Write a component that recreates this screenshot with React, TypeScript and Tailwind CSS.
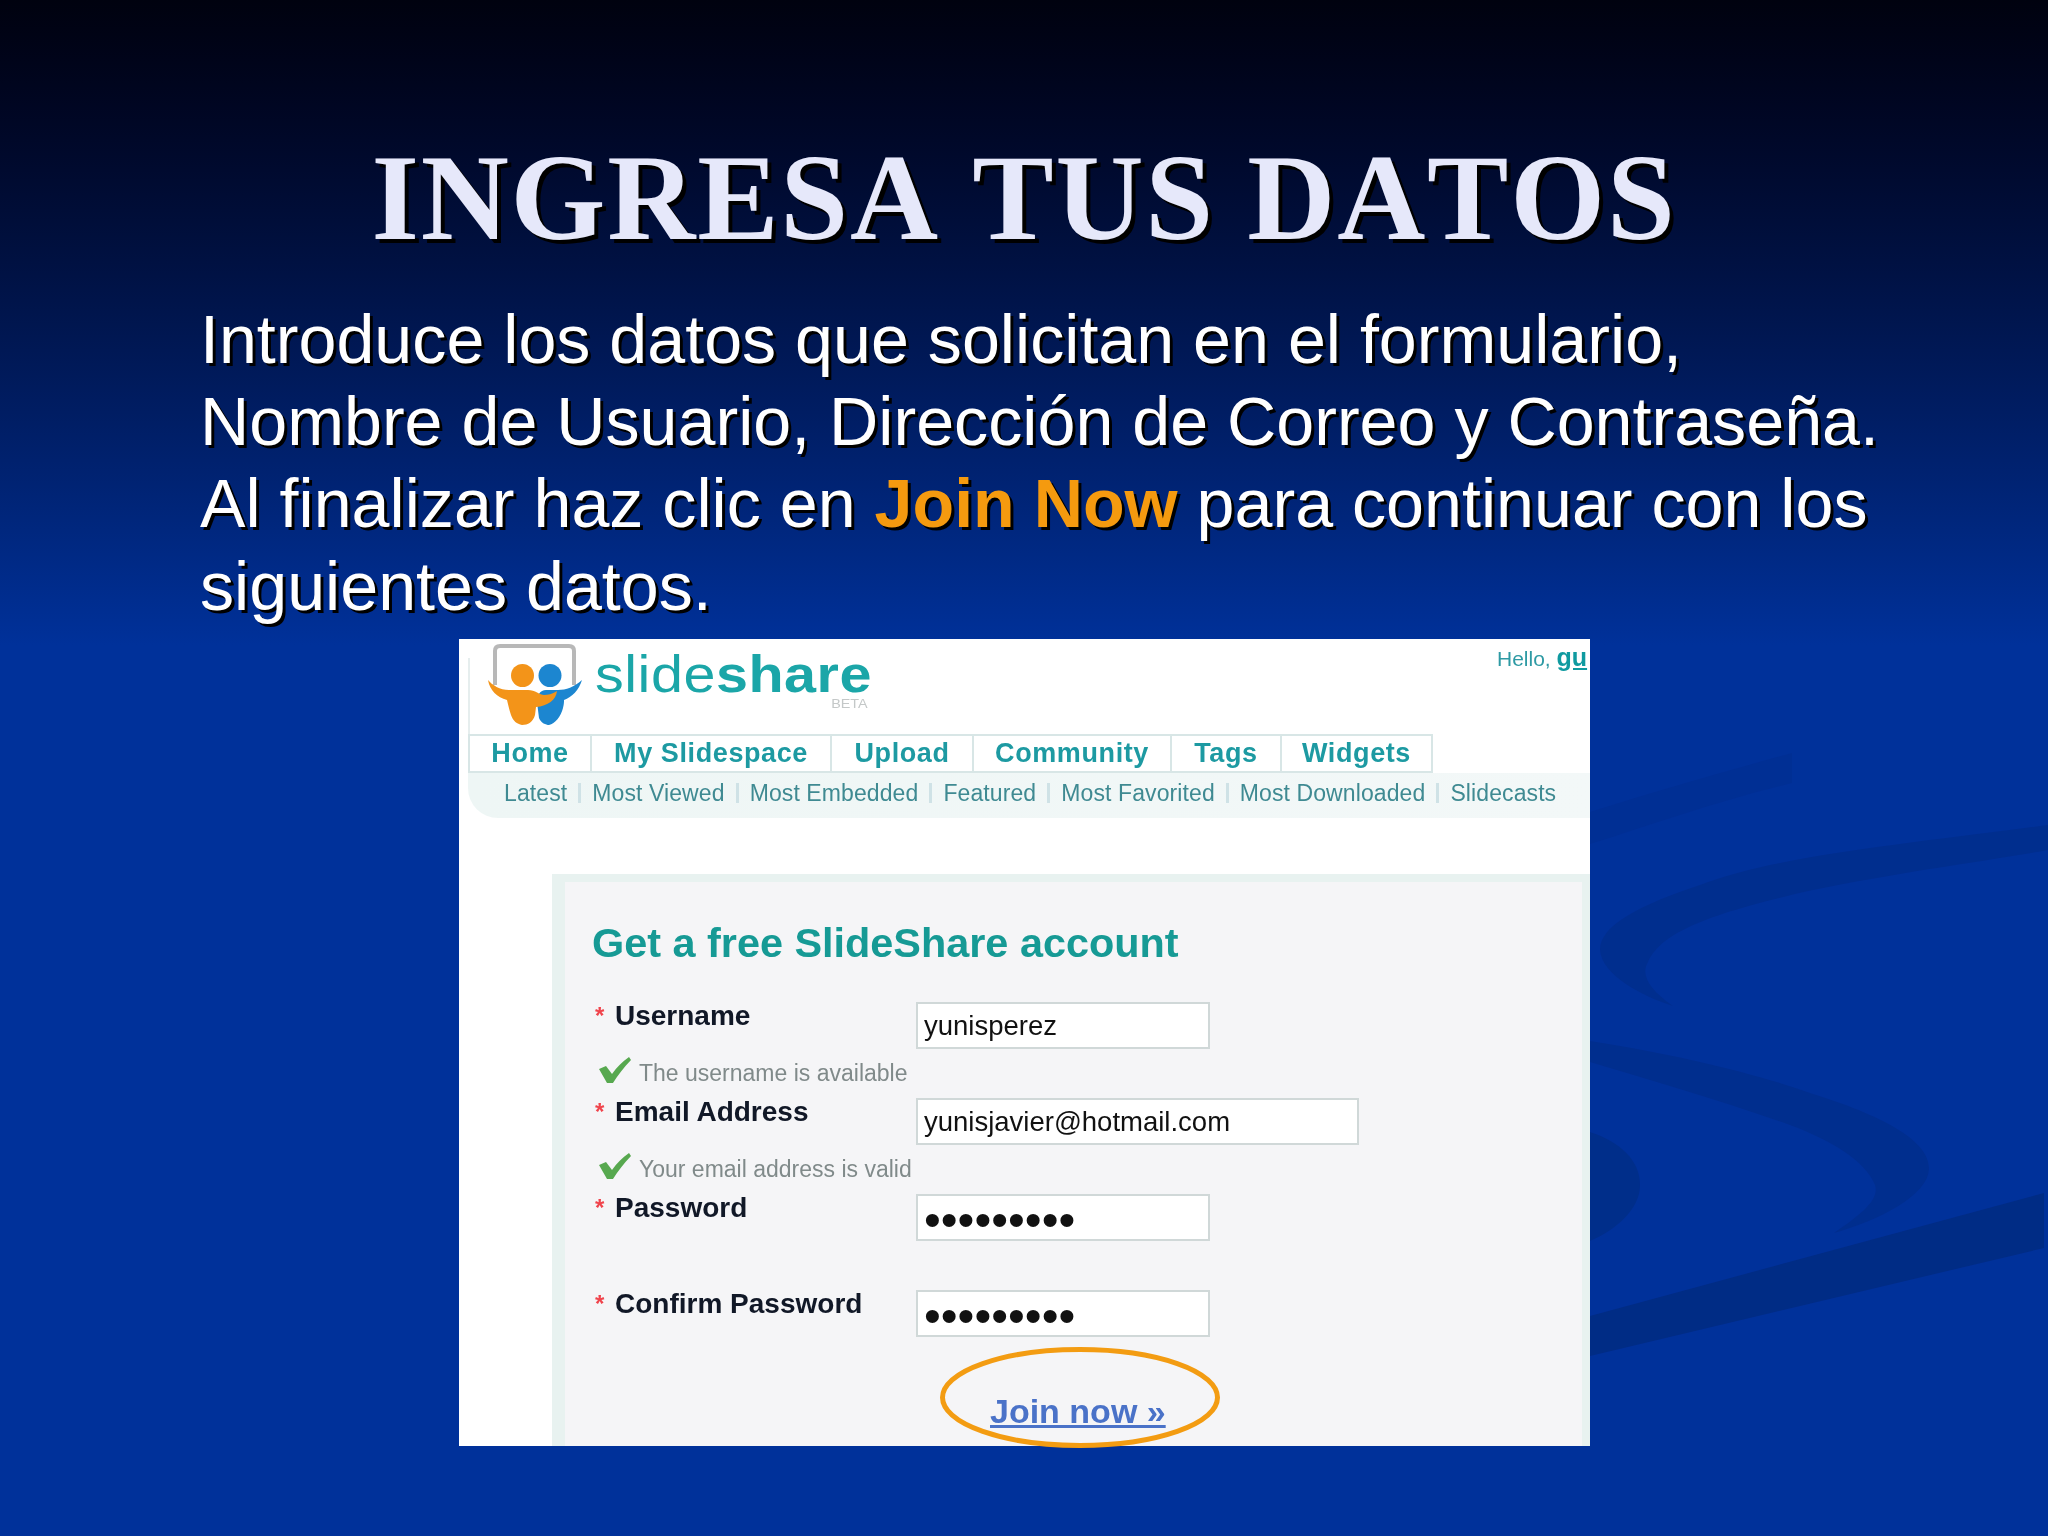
import React from 'react';

const tabs = [
  { label: 'Home', width: 'w-[122px]' },
  { label: 'My Slidespace', width: 'w-[240px]' },
  { label: 'Upload', width: 'w-[142px]' },
  { label: 'Community', width: 'w-[198px]' },
  { label: 'Tags', width: 'w-[110px]' },
  { label: 'Widgets', width: 'w-[149px]' },
];

const subLinks = ['Latest', 'Most Viewed', 'Most Embedded', 'Featured', 'Most Favorited', 'Most Downloaded', 'Slidecasts'];

// Decorative swooshes of the slide template
const Swooshes = () => (
  <svg className="absolute inset-0" width="2048" height="1536" viewBox="0 0 2048 1536" fill="none">
    <path d="M1590 812 C1660 790 1730 770 1792 753 L1792 783 C1720 800 1650 825 1590 844 Z" fill="#002f94" />
    <path d="M2048 825 C1900 845 1780 855 1700 885 C1640 905 1600 925 1600 950 C1602 975 1640 995 1673 1006 C1650 990 1640 975 1648 962 C1660 935 1700 915 1813 890 C1900 872 1980 862 2048 850 Z" fill="#002e8e" />
    <path d="M1590 1041 C1680 1055 1760 1075 1813 1094 C1880 1115 1930 1140 1929 1169 C1928 1195 1880 1220 1834 1233 C1860 1215 1880 1200 1875 1185 C1865 1160 1830 1140 1790 1125 C1720 1100 1650 1080 1590 1062 Z" fill="#002e8e" />
    <path d="M1590 1132 C1620 1142 1640 1160 1640 1185 C1640 1210 1615 1230 1590 1241 Z" fill="#002e8a" />
    <path d="M1590 1316 L2044 1193 L2044 1248 L1590 1356 Z" fill="#002c85" />
  </svg>
);

const Logo = () => (
  <svg className="mt-[4px] ml-[29px] shrink-0" width="94" height="82" viewBox="488 642 94 82" fill="none">
    <path d="M495 684 L495 650 Q495 645 500 645 L569 645 Q574 645 574 650 L574 684" stroke="#b8b8b8" strokeWidth="4" fill="#fff" />
    <circle cx="550" cy="674.5" r="11.5" fill="#1c86d0" />
    <path d="M582 679 C574 686 566 689 558 689 L546 689 C540 689 537 694 537 701 L539 717 C541 722 546 724 549 724 C555 723 561 715 563 707 C564 703 564 701 564 699 C572 696 579 689 582 679 Z" fill="#1c86d0" />
    <circle cx="522.5" cy="674.5" r="11.5" fill="#f39419" />
    <path d="M488 679 C492 684 500 689 509 689 L528 689 C535 689 540 694 544 694 C548 694 552 693 557 690 C556 699 548 705 536 706 L535 714 C533 721 528 724 522 724 C517 723 513 720 511 714 C509 708 508 703 507 699 C497 696 490 690 488 679 Z" fill="#f39419" />
  </svg>
);

const Check = () => (
  <svg className="mb-[3px] shrink-0" width="32" height="26" viewBox="599 1057 32 26">
    <path d="M599 1069 L606 1066 L612 1074 C617 1067 622 1062 629 1057 L631 1060 C624 1067 618 1075 613 1083 L607 1083 Z" fill="#57a84f" />
  </svg>
);

const Field = ({ label, value, wide, masked, note }: { label: string; value: string; wide?: boolean; masked?: boolean; note?: string }) => (
  <div className="flex h-[96px]">
    <div className="w-[351px] shrink-0 pl-[30px]">
      <div className="flex h-[26px] items-center text-[28px] font-bold leading-[26px] text-[#111827]">
        <span className="w-[20px] text-[24px] font-bold text-[#f0444c]">*</span>
        {label}
      </div>
      {note && (
        <div className="mt-[28px] ml-[4px] flex items-end gap-[8px] whitespace-nowrap text-[23px] leading-[26px] text-[#808a8a]">
          <Check />
          {note}
        </div>
      )}
    </div>
    <div className={`${wide ? 'w-[443px]' : 'w-[294px]'} -mt-[1px] h-[47px] border-2 border-[#d0d8d8] bg-white pl-[6px] text-[#111] ${masked ? 'text-[48px] leading-[48px]' : 'text-[27.5px] leading-[44px]'}`}>
      {value}
    </div>
  </div>
);

export default function App() {
  return (
    <div className="relative h-[1536px] w-[2048px] overflow-hidden bg-gradient-to-b from-[#00020f] to-[#00319a] to-[42%] [font-family:'Liberation_Sans',Arial,sans-serif]">
      <Swooshes />

      <div className="relative flex flex-col">
        <h1 className="pt-[128px] text-center text-[122px] font-bold leading-[140px] tracking-[1.8px] text-[#e6e8fa] [font-family:'Liberation_Serif',serif] [font-kerning:none] [text-shadow:4px_4px_0_#000]">
          INGRESA TUS DATOS
        </h1>

        <p className="mt-[30px] ml-[200px] w-[1720px] text-[68.2px] leading-[82.2px] text-white [text-shadow:3px_3px_0_#000]">
          Introduce los datos que solicitan en el formulario,
          <br />
          Nombre de Usuario, Dirección de Correo y Contraseña.
          <br />
          Al finalizar haz clic en <span className="font-bold text-[#f59a0f]">Join Now</span> para continuar con los
          <br />
          siguientes datos.
        </p>

        {/* pasted slideshare screenshot */}
        <div className="relative mt-[12px] ml-[459px] h-[807px] w-[1131px] bg-white">
          <div className="h-full overflow-hidden blur-[0.4px]">
            <div className="relative flex h-[95px] justify-between">
              <div className="absolute left-[9px] top-[19px] h-[76px] w-[2px] bg-[#e6eeee]" />
              <div className="flex">
                <Logo />
                <div className="relative ml-[13px] mt-[5px] h-[60px] origin-left scale-x-[1.105] text-[52px] leading-[60px] tracking-[0.5px] text-[#1ba6a8]">
                  slide<span className="font-bold">share</span>
                  <span className="absolute right-[4px] top-[53px] text-[13px] leading-[14px] tracking-normal text-[#c4c8c8]">BETA</span>
                </div>
              </div>
              <div className="mt-[5px] w-[93px] shrink-0 whitespace-nowrap text-[21px] leading-[26px] text-[#2e9aa4]">
                Hello, <span className="text-[25px] font-bold text-[#0f9aa0] underline">gu</span>
              </div>
            </div>

            <div className="ml-[9px] flex h-[39px] w-fit border-2 border-[#d8e6e6]">
              {tabs.map((t) => (
                <div key={t.label} className={`${t.width} border-r-2 border-[#d8e6e6] text-center text-[27px] font-bold leading-[34px] tracking-[0.6px] text-[#1d9aa2] last:border-r-0`}>
                  {t.label}
                </div>
              ))}
            </div>

            <div className="ml-[9px] flex h-[45px] items-center rounded-bl-[30px] bg-gradient-to-r from-[#eef6f5] to-[#f3f8f8] pb-[5px] pl-[36px] text-[23px] tracking-[0.1px] text-[#3f8a92]">
              {subLinks.map((s, i) => (
                <React.Fragment key={s}>
                  {i > 0 && <span className="mx-[11px] h-[20px] w-[3px] bg-[#cfe2e6]" />}
                  <span className="whitespace-nowrap">{s}</span>
                </React.Fragment>
              ))}
            </div>

            <div className="mt-[56px] ml-[93px] h-[572px] border-t-8 border-r-8 border-l-[13px] border-[#e8f2f0] bg-[#f5f5f7]">
              <h2 className="ml-[27px] mb-[36px] pt-[37px] text-[41.4px] font-bold leading-[48px] text-[#169a95]">
                Get a free SlideShare account
              </h2>
              <Field label="Username" value="yunisperez" note="The username is available" />
              <Field label="Email Address" value="yunisjavier@hotmail.com" wide note="Your email address is valid" />
              <Field label="Password" value="•••••••••" masked />
              <Field label="Confirm Password" value="•••••••••" masked />
              <a className="mt-[4px] ml-[425px] block w-fit text-[34px] font-bold leading-[40px] text-[#4a72c8] underline">Join now »</a>
            </div>
          </div>

          {/* orange highlight around the link */}
          <svg className="absolute left-[481px] top-[708px]" width="280" height="101" viewBox="0 0 280 101" fill="none">
            <ellipse cx="140" cy="50.5" rx="137.5" ry="48" stroke="#f39c12" strokeWidth="5" />
          </svg>
        </div>
      </div>
    </div>
  );
}
